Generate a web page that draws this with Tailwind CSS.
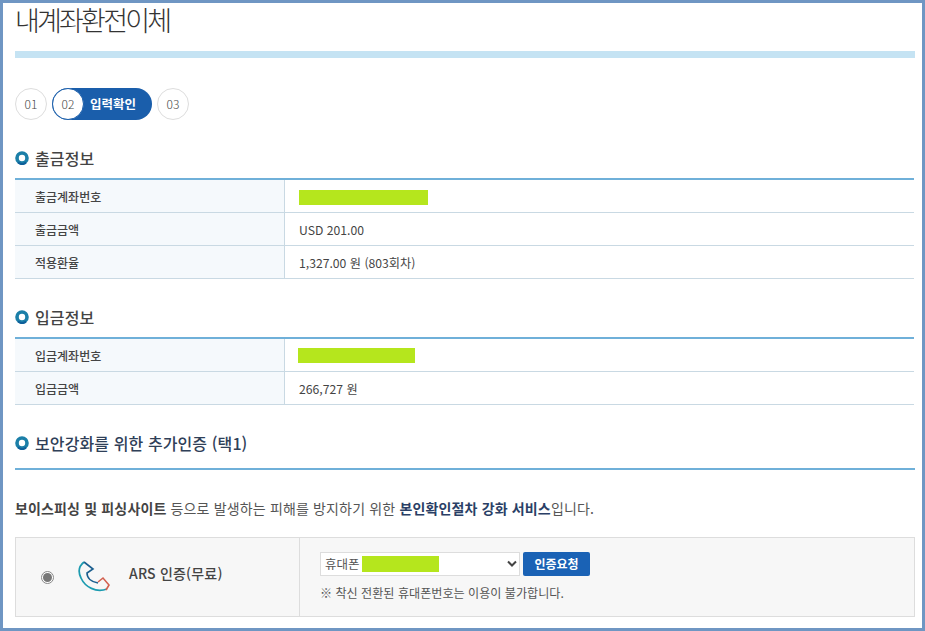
<!DOCTYPE html>
<html lang="ko">
<head>
  <meta charset="UTF-8">
  <title>내계좌환전이체</title>
  <script src="https://cdn.jsdelivr.net/npm/@tailwindcss/browser@4"></script>
</head>
<body class="bg-white">
  <div class="w-[925px] h-[631px] overflow-hidden border-[3px] border-[#6f96c3] bg-white pl-3 pr-[7px] font-['Noto_Sans_CJK_KR','Noto_Sans',sans-serif] text-[#444]">
    <h1 class="h-[34px] text-[27px] leading-[34px] font-light tracking-[-2.8px] text-[#333]">내계좌환전이체</h1>
    <div class="mt-[14px] h-[7px] bg-[#c5e3f3]"></div>

    <!-- steps -->
    <div class="mt-[30px] flex items-center gap-[5px] text-xs text-[#444]">
      <div class="flex h-8 w-8 items-center justify-center rounded-full border border-[#ddd] font-light">01</div>
      <div class="flex h-8 w-[100px] items-center rounded-full bg-[#1a5eab]">
        <div class="flex h-8 w-8 items-center justify-center rounded-full border border-[#1a5eab] bg-white font-light">02</div>
        <span class="ml-[6px] text-[12.5px] font-bold text-white">입력확인</span>
      </div>
      <div class="flex h-8 w-8 items-center justify-center rounded-full border border-[#ddd] font-light">03</div>
    </div>

    <!-- 출금정보 -->
    <div class="mt-[26px] flex h-[24px] items-center gap-[6px]">
      <svg width="14" height="14" viewBox="0 0 14 14"><circle cx="7" cy="7" r="5" fill="none" stroke="#1b7fa8" stroke-width="3.6"/><path d="M3 11.5A6.5 6.5 0 0 0 11 11.6" fill="none" stroke="#0e5f9a" stroke-width="2"/></svg>
      <h2 class="text-[16px] font-medium tracking-[0.1px] text-[#444]">출금정보</h2>
    </div>
    <div class="mt-[8px] mr-[1px] border-t-2 border-[#6fb0d9] text-[12.2px]">
      <div class="flex h-[33px] border-b border-[#c9d9e3]">
        <div class="flex w-[270px] items-center border-r border-[#c9d9e3] bg-[#f5f9fc] pl-5 pt-[2px] text-xs font-medium">출금계좌번호</div>
        <div class="flex items-center pl-[14px] pt-[2px]"><div class="h-[15px] w-[129px] bg-[#b5e61d]"></div></div>
      </div>
      <div class="flex h-[33px] border-b border-[#c9d9e3]">
        <div class="flex w-[270px] items-center border-r border-[#c9d9e3] bg-[#f5f9fc] pl-5 pt-[2px] text-xs font-medium">출금금액</div>
        <div class="flex items-center pl-[14px] pt-[2px]">USD 201.00</div>
      </div>
      <div class="flex h-[33px] border-b border-[#c9d9e3]">
        <div class="flex w-[270px] items-center border-r border-[#c9d9e3] bg-[#f5f9fc] pl-5 pt-[2px] text-xs font-medium">적용환율</div>
        <div class="flex items-center pl-[14px] pt-[2px]">1,327.00 원 (803회차)</div>
      </div>
    </div>

    <!-- 입금정보 -->
    <div class="mt-[26px] flex h-[24px] items-center gap-[6px]">
      <svg width="14" height="14" viewBox="0 0 14 14"><circle cx="7" cy="7" r="5" fill="none" stroke="#1b7fa8" stroke-width="3.6"/><path d="M3 11.5A6.5 6.5 0 0 0 11 11.6" fill="none" stroke="#0e5f9a" stroke-width="2"/></svg>
      <h2 class="text-[16px] font-medium tracking-[0.1px] text-[#444]">입금정보</h2>
    </div>
    <div class="mt-[8px] mr-[1px] border-t-2 border-[#6fb0d9] text-[12.2px]">
      <div class="flex h-[33px] border-b border-[#c9d9e3]">
        <div class="flex w-[270px] items-center border-r border-[#c9d9e3] bg-[#f5f9fc] pl-5 pt-[2px] text-xs font-medium">입금계좌번호</div>
        <div class="flex items-center pl-[13px]"><div class="h-[15px] w-[117px] bg-[#b5e61d]"></div></div>
      </div>
      <div class="flex h-[33px] border-b border-[#c9d9e3]">
        <div class="flex w-[270px] items-center border-r border-[#c9d9e3] bg-[#f5f9fc] pl-5 pt-[2px] text-xs font-medium">입금금액</div>
        <div class="flex items-center pl-[14px] pt-[2px]">266,727 원</div>
      </div>
    </div>

    <!-- 추가인증 -->
    <div class="mt-[26px] flex h-[24px] items-center gap-[6px]">
      <svg width="14" height="14" viewBox="0 0 14 14"><circle cx="7" cy="7" r="5" fill="none" stroke="#1b7fa8" stroke-width="3.6"/><path d="M3 11.5A6.5 6.5 0 0 0 11 11.6" fill="none" stroke="#0e5f9a" stroke-width="2"/></svg>
      <h2 class="text-[16px] font-medium tracking-[0.1px] text-[#2f4058]">보안강화를 위한 추가인증 (택1)</h2>
    </div>
    <div class="mt-[13px] border-t-2 border-[#6fb0d9]"></div>
    <p class="mt-[28px] h-[20px] text-[14px] leading-[20px] tracking-[0.15px] text-[#555]"><b class="font-bold text-[#444]">보이스피싱 및 피싱사이트</b> 등으로 발생하는 피해를 방지하기 위한 <b class="font-bold text-[#2a3f66]">본인확인절차 강화 서비스</b>입니다.</p>

    <!-- ARS -->
    <div class="mt-[19px] flex h-[80px] border border-[#ddd] bg-[#f7f7f7]">
      <div class="flex w-[284px] items-center border-r border-[#ddd]">
        <span class="ml-[25px] flex h-[13px] w-[13px] items-center justify-center rounded-full border border-[#888] bg-white"><span class="h-[9px] w-[9px] rounded-full bg-[#777]"></span></span>
        <svg class="ml-[24px] -mt-[2px]" width="32" height="32" viewBox="0 0 32 32" fill="none">
          <path d="M6 2C1 6 0 12 3 18C7 27 18 33 29 29" stroke="#1c9bb0" stroke-width="1.7"/>
          <path d="M6 2L15 9L9 13C9 18 13 22 20 23" stroke="#1c5f8f" stroke-width="1.6"/>
          <path d="M20 22L25 18L31 25L28 30" stroke="#d2604f" stroke-width="1.6"/>
        </svg>
        <span class="ml-[19px] -mt-[8px] text-[14px] font-medium tracking-[0.2px] text-[#444]">ARS 인증(무료)</span>
      </div>
      <div class="pl-5 pt-[14px]">
        <div class="flex items-center gap-[3px]">
          <div class="relative flex h-[24px] w-[200px] items-center border border-[#ddd] bg-white pl-[4px] text-[12.5px] text-[#555]">
            휴대폰
            <div class="absolute left-[41px] top-[3px] h-[16px] w-[77px] bg-[#b5e61d]"></div>
            <svg class="absolute right-[2px] top-[7px]" width="10" height="8" viewBox="0 0 10 8" fill="none"><path d="M1 1.5L5 5.5L9 1.5" stroke="#444" stroke-width="2"/></svg>
          </div>
          <button class="h-[24px] w-[67px] rounded-[2px] bg-[#1a62b5] text-xs font-bold text-white">인증요청</button>
        </div>
        <p class="mt-[8px] text-[12.1px] text-[#555]">※ 착신 전환된 휴대폰번호는 이용이 불가합니다.</p>
      </div>
    </div>
  </div>
</body>
</html>
